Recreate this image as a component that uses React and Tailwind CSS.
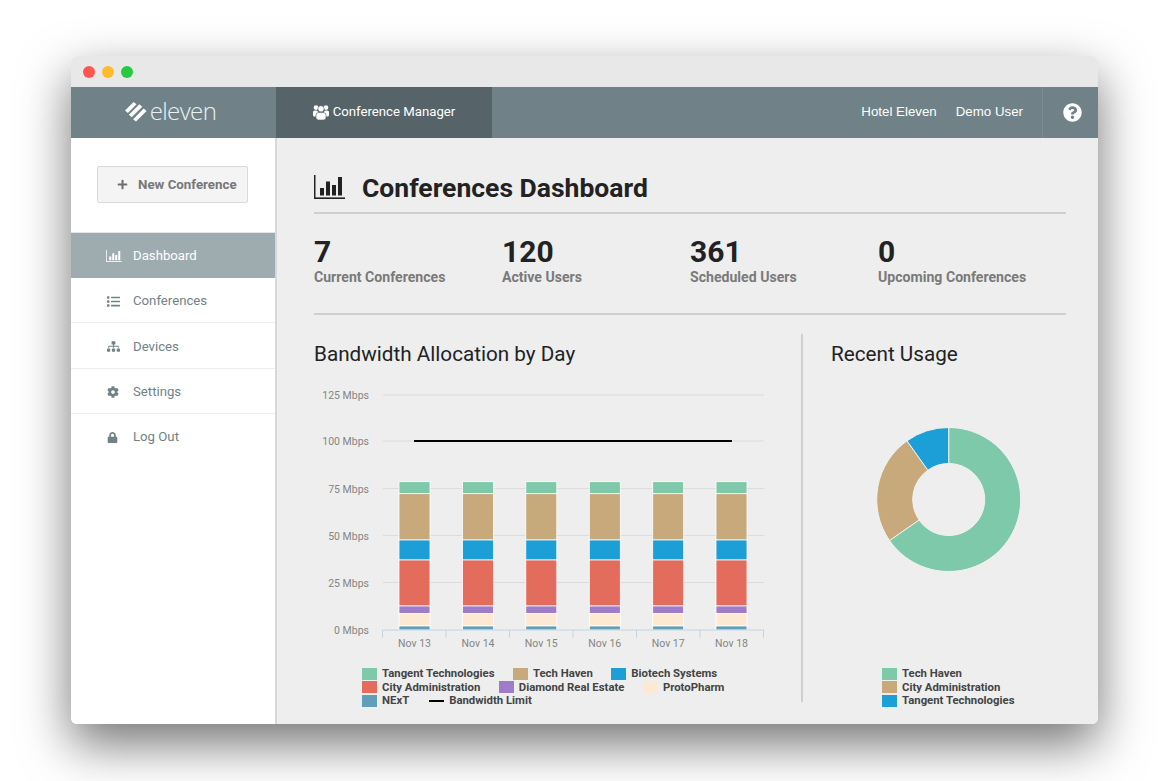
import React from "react";
import { FaPlus, FaList, FaSitemap, FaCog, FaLock, FaQuestionCircle } from "react-icons/fa";

const COLORS = {
  green: "#7fc9ab",
  tan: "#c7a97c",
  blue: "#1b9fd6",
  red: "#e36c5c",
  purple: "#9f7cc9",
  cream: "#fde8d3",
  teal: "#5f9fb8",
};

const segments = [
  [481.7, 493.7, COLORS.green],
  [493.7, 540, COLORS.tan],
  [540, 560, COLORS.blue],
  [560, 606, COLORS.red],
  [606, 613.5, COLORS.purple],
  [613.5, 626, COLORS.cream],
  [626, 630, COLORS.teal],
];

const days = ["Nov 13", "Nov 14", "Nov 15", "Nov 16", "Nov 17", "Nov 18"];
const centers = [414.5, 478, 541.3, 604.8, 668.2, 731.5];
const ticks = [
  ["125 Mbps", 395],
  ["100 Mbps", 441],
  ["75 Mbps", 488.5],
  ["50 Mbps", 535.5],
  ["25 Mbps", 582.5],
  ["0 Mbps", 630],
];

const navItems = [
  { label: "Conferences", icon: <FaList className="text-[13px]" /> },
  { label: "Devices", icon: <FaSitemap className="text-[13px]" /> },
  { label: "Settings", icon: <FaCog className="text-[12px]" /> },
  { label: "Log Out", icon: <FaLock className="text-[11px]" /> },
];

const stats = [
  ["7", "Current Conferences"],
  ["120", "Active Users"],
  ["361", "Scheduled Users"],
  ["0", "Upcoming Conferences"],
];

const BarChartIcon = ({ className }) => (
  <svg viewBox="0 0 31 24" className={className} fill="currentColor">
    <rect x="0" y="0" width="1.5" height="24" />
    <rect x="0" y="22.4" width="31" height="1.6" />
    <rect x="6" y="13" width="4" height="7.5" />
    <rect x="12" y="6.5" width="4" height="14" />
    <rect x="18" y="10" width="4" height="10.5" />
    <rect x="24" y="2" width="4" height="18.5" />
  </svg>
);

// the package's users icon is too flat, this one has the taller bodies
const UsersIcon = () => (
  <svg viewBox="0 0 16 15" className="w-[16px] h-[15px]" fill="#fff">
    <circle cx="3" cy="2.6" r="2.3" />
    <circle cx="13" cy="2.6" r="2.3" />
    <rect x="0" y="5.6" width="5" height="6" rx="1.6" />
    <rect x="11" y="5.6" width="5" height="6" rx="1.6" />
    <circle cx="8" cy="3.8" r="3.1" stroke="#566469" strokeWidth="0.6" />
    <rect x="3" y="7.6" width="10" height="7.4" rx="2.4" stroke="#566469" strokeWidth="0.6" />
  </svg>
);

const LegendItem = ({ color, label }) => (
  <div className="flex items-center gap-[5px]">
    <span className="w-[15px] h-[12px]" style={{ backgroundColor: color }} />
    <span>{label}</span>
  </div>
);

const LegendLine = ({ label }) => (
  <div className="flex items-center gap-[5px]">
    <span className="w-[15px] h-[2px] bg-black" />
    <span>{label}</span>
  </div>
);

const arc = (cx, cy, r, r0, start, end) => {
  const pt = (rad, deg) => {
    const a = (deg * Math.PI) / 180;
    return `${(cx + rad * Math.sin(a)).toFixed(2)} ${(cy - rad * Math.cos(a)).toFixed(2)}`;
  };
  const large = end - start > 180 ? 1 : 0;
  return `M${pt(r, start)} A${r} ${r} 0 ${large} 1 ${pt(r, end)} L${pt(r0, end)} A${r0} ${r0} 0 ${large} 0 ${pt(r0, start)} Z`;
};

const BandwidthChart = () => (
  <svg viewBox="314 385 470 265" className="w-[470px] h-[265px] block font-['Roboto',sans-serif]">
    {ticks.map(([label, y]) => (
      <g key={label}>
        <text x="369" y={y + 4} textAnchor="end" fontSize="10.5" fill="#858585">{label}</text>
        {y !== 630 && <line x1="383" x2="764" y1={y} y2={y} stroke="#dcdcdc" strokeWidth="1" />}
      </g>
    ))}
    {centers.map((c) =>
      segments.map(([y0, y1, color]) => (
        <rect key={`${c}-${y0}`} x={c - 15.5} y={y0} width="31" height={y1 - y0} fill={color} stroke="#fff" strokeWidth="0.8" />
      ))
    )}
    <line x1="414" x2="732" y1="441" y2="441" stroke="#000" strokeWidth="2" />
    <line x1="382.5" x2="764" y1="630" y2="630" stroke="#c5d3de" strokeWidth="1" />
    {[382.5, 446, 509.5, 573, 636.5, 700, 763.5].map((x) => (
      <line key={x} x1={x} x2={x} y1="630" y2="638" stroke="#c5d3de" strokeWidth="1" />
    ))}
    {days.map((d, i) => (
      <text key={d} x={centers[i]} y="647" textAnchor="middle" fontSize="10.5" fill="#858585">{d}</text>
    ))}
  </svg>
);

const UsageDonut = () => (
  <svg viewBox="0 0 146 145" className="w-[146px] h-[145px] block">
    <g stroke="#f2f2f2" strokeWidth="1">
      <path d={arc(72.7, 72.5, 72, 36, 0, 235.3)} fill={COLORS.green} />
      <path d={arc(72.7, 72.5, 72, 36, 235.3, 324.6)} fill={COLORS.tan} />
      <path d={arc(72.7, 72.5, 72, 36, 324.6, 360)} fill={COLORS.blue} />
    </g>
  </svg>
);

export default function App() {
  return (
    <div className="h-screen overflow-hidden bg-white pt-[56px] pl-[71px] font-['Roboto',sans-serif]">
      <div className="w-[1027px] h-[668px] flex flex-col rounded-[6px] overflow-hidden shadow-[0_20px_50px_rgba(0,0,0,0.55)]">
        <div className="h-[31px] shrink-0 bg-[#e8e8e8] flex items-center gap-[7px] pl-[12px]">
          <span className="w-[12px] h-[12px] rounded-full bg-[#fd5750]" />
          <span className="w-[12px] h-[12px] rounded-full bg-[#febb2e]" />
          <span className="w-[12px] h-[12px] rounded-full bg-[#28c840]" />
        </div>

        <header className="h-[51px] shrink-0 bg-[#708288] flex items-stretch text-white">
          <div className="w-[205px] flex items-center justify-center gap-[2px] pr-[6px] pb-[3px]">
            <svg viewBox="0 0 24 23" className="w-[23px] h-[22px]" fill="#fff">
              <polygon points="0,11 9,2 12,4.5 3,13.5" />
              <polygon points="4,15.5 15,4.5 18,7 7,18" />
              <polygon points="8.5,20 19.5,9 22.5,11.5 11.5,22.5" />
            </svg>
            <span className="font-['Open_Sans',sans-serif] font-light text-[24px] tracking-[-0.6px] leading-none text-[#eef1f2]">eleven</span>
          </div>
          <div className="w-[216px] bg-[#566469] flex items-center justify-center gap-[4px] text-[13.2px] pb-[1px]">
            <UsersIcon />
            <span>Conference Manager</span>
          </div>
          <div className="flex-1 flex items-center justify-end gap-[19px] pr-[19px] pb-[1px] font-['Liberation_Sans',sans-serif] text-[13.3px]">
            <span>Hotel Eleven</span>
            <span>Demo User</span>
          </div>
          <div className="w-[56px] border-l border-[#7b8c92] flex items-center justify-center pl-[4px] pb-[1px]">
            <FaQuestionCircle className="text-[19px]" />
          </div>
        </header>

        <div className="flex-1 flex min-h-0">
          <aside className="w-[206px] shrink-0 bg-white border-r-2 border-[#d8d8d8]">
            <div className="h-[95px] border-b border-[#e4e4e4] pl-[26px] pt-[28px]">
              <button className="w-[151px] h-[37px] bg-[#f4f4f4] border border-[#d9d9d9] rounded-[2px] flex items-center gap-[10px] pl-[19px] text-[13.3px] font-bold text-[#777]">
                <FaPlus className="text-[11px] text-[#6f6f6f]" />
                <span>New Conference</span>
              </button>
            </div>
            <div className="h-[45px] bg-[#9eacaf] text-white flex items-center pl-[35px] pt-[1px] gap-[11px] text-[13.2px]">
              <BarChartIcon className="w-[16px] h-[12px]" />
              <span>Dashboard</span>
            </div>
            {navItems.map((item, i) => (
              <div
                key={item.label}
                className={`h-[45.4px] flex items-center pl-[36px] text-[13.2px] text-[#708288] ${i < 3 ? "border-b border-[#ececec] pt-[2px]" : "pt-[1px]"}`}
              >
                <span className="w-[26px]">{item.icon}</span>
                <span>{item.label}</span>
              </div>
            ))}
          </aside>

          <main className="flex-1 bg-[#eeeeee] pl-[37px] pr-[32px] min-w-0">
            <div className="h-[76px] border-b-2 border-[#cfcfcf] flex items-end gap-[17px] pb-[11px] text-[#222]">
              <BarChartIcon className="w-[31px] h-[24px] mb-[2px]" />
              <h1 className="text-[26.5px] font-bold leading-none">Conferences Dashboard</h1>
            </div>
            <div className="h-[101px] border-b-2 border-[#cfcfcf] grid grid-cols-4 pt-[22px]">
              {stats.map(([value, label]) => (
                <div key={label}>
                  <div className="text-[30px] font-bold leading-[31px] text-[#222]">{value}</div>
                  <div className="text-[14.1px] font-bold leading-[20px] text-[#7a7a7a]">{label}</div>
                </div>
              ))}
            </div>
            <div className="flex mt-[19px] h-[368px]">
              <section className="w-[489px] border-r-2 border-[#cfcfcf]">
                <h2 className="text-[20.7px] leading-[40px] text-[#222]">Bandwidth Allocation by Day</h2>
                <div className="mt-[11px]">
                  <BandwidthChart />
                </div>
                <div className="mt-[17px] ml-[48px] text-[11.35px] leading-[13.5px] font-bold text-[#444] flex flex-col">
                  <div className="flex gap-[18.5px]">
                    <LegendItem color={COLORS.green} label="Tangent Technologies" />
                    <LegendItem color={COLORS.tan} label="Tech Haven" />
                    <LegendItem color={COLORS.blue} label="Biotech Systems" />
                  </div>
                  <div className="flex gap-[18.5px]">
                    <LegendItem color={COLORS.red} label="City Administration" />
                    <LegendItem color={COLORS.purple} label="Diamond Real Estate" />
                    <LegendItem color={COLORS.cream} label="ProtoPharm" />
                  </div>
                  <div className="flex gap-[20px]">
                    <LegendItem color={COLORS.teal} label="NExT" />
                    <LegendLine label="Bandwidth Limit" />
                  </div>
                </div>
              </section>
              <section className="flex-1 pl-[28px]">
                <h2 className="text-[20.7px] leading-[40px] text-[#222]">Recent Usage</h2>
                <div className="mt-[53px] ml-[45px]">
                  <UsageDonut />
                </div>
                <div className="mt-[95px] ml-[51px] text-[11.35px] leading-[13.5px] font-bold text-[#444] flex flex-col">
                  <LegendItem color={COLORS.green} label="Tech Haven" />
                  <LegendItem color={COLORS.tan} label="City Administration" />
                  <LegendItem color={COLORS.blue} label="Tangent Technologies" />
                </div>
              </section>
            </div>
          </main>
        </div>
      </div>
    </div>
  );
}
